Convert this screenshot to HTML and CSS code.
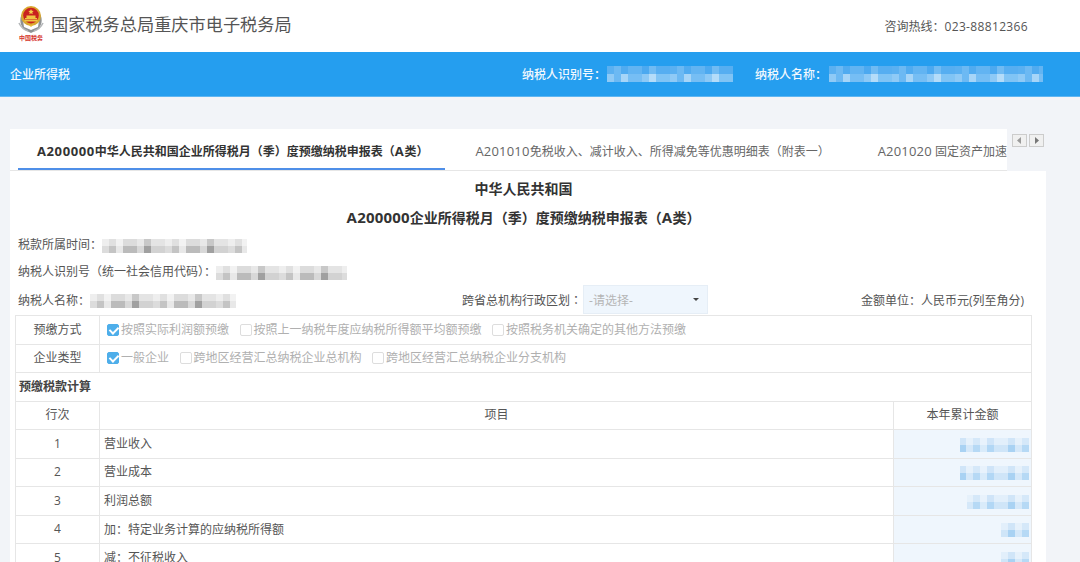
FILE: index.html
```html
<!DOCTYPE html>
<html lang="zh-CN">
<head>
<meta charset="utf-8">
<title>国家税务总局重庆市电子税务局</title>
<link rel="stylesheet" href="styles.css">
</head>
<body>
<header class="top">
  <div class="brand">
    <div class="logo">
      <svg class="emblem" width="28" height="28" viewBox="0 0 28 28" aria-hidden="true">
        <path d="M5 8C2 13 3 20 8 24L14 27L20 24C25 20 26 13 23 8L21 21L14 24L7 21Z" fill="#8f9294"/>
        <path d="M2 17C4 21 7 24 11 25M26 17C24 21 21 24 17 25" stroke="#b4b7b9" stroke-width="1.6" fill="none"/>
        <circle cx="14" cy="10" r="10" fill="#d9a62e"/>
        <circle cx="14" cy="9.6" r="7.8" fill="#c9201f"/>
        <path d="M14 3l.8 1.8 1.9.2-1.4 1.3.4 1.9-1.7-1-1.7 1 .4-1.9-1.4-1.3 1.9-.2z" fill="#f4cf4a"/>
        <path d="M8 12h12v1.5H8zM9.5 9.5h9V12h-9zM7.5 14h13v1.4h-13z" fill="#f0c544"/>
        <path d="M11 18l3 3 3-3-3 1z" fill="#e7b93a"/>
      </svg>
      <span class="seal">中国税务</span>
    </div>
    <h1 class="site-name">国家税务总局重庆市电子税务局</h1>
  </div>
  <div class="hotline">咨询热线<span class="colon">：</span><span class="phone">023-88812366</span></div>
</header>

<div class="bar">
  <span class="bar-title">企业所得税</span>
  <div class="bar-info">
    <span class="bar-label">纳税人识别号<span class="colon">：</span></span><span class="mosaic m-bar m-bar-id"></span>
    <span class="bar-label bar-label-name">纳税人名称<span class="colon">：</span></span><span class="mosaic m-bar m-bar-name"></span>
  </div>
</div>

<main class="page">
  <div class="tabs-row">
    <nav class="tabs">
      <a class="tab active"><span class="lat">A200000</span>中华人民共和国企业所得税月（季）度预缴纳税申报表（<span class="lat">A</span>类）</a>
      <a class="tab"><span class="lat">A201010</span>免税收入、减计收入、所得减免等优惠明细表（附表一）</a>
      <a class="tab"><span class="lat">A201020</span> 固定资产加速折旧（扣除）明细表（附表二）</a>
    </nav>
    <div class="arrows">
      <button class="arrow"><svg width="5" height="7" viewBox="0 0 5 7"><path d="M4 0v7L0 3.5z" fill="#9a9a9a"/></svg></button>
      <button class="arrow"><svg width="5" height="7" viewBox="0 0 5 7"><path d="M1 0v7l4-3.5z" fill="#777"/></svg></button>
    </div>
  </div>

  <section class="sheet">
    <h2 class="title title-1">中华人民共和国</h2>
    <h2 class="title title-2"><span class="lat">A200000</span>企业所得税月（季）度预缴纳税申报表（<span class="lat">A</span>类）</h2>
    <div class="meta meta-1">税款所属时间<span class="colon">：</span><span class="mosaic m-gray m-period"></span></div>
    <div class="meta meta-2">纳税人识别号（统一社会信用代码）<span class="colon">：</span><span class="mosaic m-gray m-id"></span></div>
    <div class="meta-row">
      <div class="meta-cell name-cell">纳税人名称<span class="colon">：</span><span class="mosaic m-gray m-name"></span></div>
      <div class="meta-cell region-cell">跨省总机构行政区划<span class="colon">：</span><span class="select"><span>-请选择-</span><i class="caret"></i></span></div>
      <div class="meta-cell unit-cell">金额单位<span class="colon">：</span>人民币元(列至角分)</div>
    </div>

    <table class="form">
      <colgroup><col class="c1"><col class="c2"><col class="c3"></colgroup>
      <tbody>
        <tr>
          <td class="ctr">预缴方式</td>
          <td colspan="2" class="opts">
            <div class="opt-list">
              <label class="opt"><i class="box on"></i>按照实际利润额预缴</label>
              <label class="opt"><i class="box"></i>按照上一纳税年度应纳税所得额平均额预缴</label>
              <label class="opt"><i class="box"></i>按照税务机关确定的其他方法预缴</label>
            </div>
          </td>
        </tr>
        <tr>
          <td class="ctr">企业类型</td>
          <td colspan="2" class="opts">
            <div class="opt-list">
              <label class="opt"><i class="box on"></i>一般企业</label>
              <label class="opt"><i class="box"></i>跨地区经营汇总纳税企业总机构</label>
              <label class="opt"><i class="box"></i>跨地区经营汇总纳税企业分支机构</label>
            </div>
          </td>
        </tr>
        <tr><td colspan="3" class="section">预缴税款计算</td></tr>
        <tr>
          <td class="ctr">行次</td>
          <td class="ctr">项目</td>
          <td class="ctr">本年累计金额</td>
        </tr>
        <tr><td class="ctr">1</td><td>营业收入</td><td class="amt"><span class="mosaic m-blue m-w70"></span></td></tr>
        <tr><td class="ctr">2</td><td>营业成本</td><td class="amt"><span class="mosaic m-blue m-w70"></span></td></tr>
        <tr><td class="ctr">3</td><td>利润总额</td><td class="amt"><span class="mosaic m-blue m-w63"></span></td></tr>
        <tr><td class="ctr">4</td><td>加<span class="colon">：</span>特定业务计算的应纳税所得额</td><td class="amt"><span class="mosaic m-blue m-w28"></span></td></tr>
        <tr><td class="ctr">5</td><td>减<span class="colon">：</span>不征税收入</td><td class="amt"><span class="mosaic m-blue m-w28"></span></td></tr>
      </tbody>
    </table>
  </section>
</main>
</body>
</html>
```
FILE: styles.css
```css
* { box-sizing: border-box; }
html, body { margin: 0; height: 562px; overflow: hidden; }
body {
  background: #f2f4f8;
  color: #444;
  font-family: "Open Sans", "Noto Sans CJK SC", sans-serif;
  font-size: 12px;
}
.colon { font-family: "Noto Sans CJK TC", "Noto Sans CJK SC", sans-serif; }
.lat { font-size: 13px; letter-spacing: 0.2px; }

.top {
  height: 52px;
  background: #fff;
  display: flex;
  justify-content: space-between;
  align-items: center;
  padding: 0 52px 0 17px;
}
.brand { display: flex; align-items: center; }
.logo { width: 28px; height: 42px; display: flex; flex-direction: column; align-items: center; margin-top: 1px; }
.emblem { display: block; flex: none; }
.seal {
  color: #d5342c;
  font-size: 6px;
  line-height: 9px;
  font-weight: 700;
  white-space: nowrap;
}
.site-name {
  margin: 0 0 3px 6px;
  font-size: 17.2px;
  font-weight: 400;
  color: #555;
  line-height: 24px;
}
.hotline { color: #555; font-size: 12px; line-height: 18px; }
.phone { letter-spacing: 0.35px; }

.bar {
  height: 45px;
  background: #259eef;
  border-bottom: 1px solid #5fb6f2;
  color: #f1f8fe;
  display: flex;
  justify-content: space-between;
  align-items: center;
  padding: 0 37px 0 10px;
  font-weight: 500;
}
.bar-info { display: flex; align-items: center; }
.m-bar-id { margin-left: 1px; }
.bar-label-name { margin-left: 22px; }
.m-bar-name { margin-left: 2px; }

.mosaic { display: inline-block; flex: none; vertical-align: middle; filter: blur(0.6px); background-repeat: no-repeat; background-size: 100% 50%; background-position: left top, left bottom; height: 14px; }
.m-bar {
  height: 16px;
  background-image:
    repeating-linear-gradient(90deg, #5ab0f1 0 7px, #6cb9f3 7px 14px, #50abf0 14px 21px, #62b4f2 21px 35px, #4ca9f0 35px 42px, #70bbf3 42px 49px, #56aef1 49px 63px),
    repeating-linear-gradient(90deg, #8fcaf6 0 7px, #6cb9f3 7px 14px, #a6d5f8 14px 21px, #76bef4 21px 35px, #8dc9f6 35px 42px, #b4dcf9 42px 49px, #80c4f5 49px 63px);
}
.m-bar-id { width: 126px; }
.m-bar-name { width: 214px; }
.m-gray {
  background-image:
    repeating-linear-gradient(90deg, #eee 0 7px, #e0e0e0 7px 14px, #f2f2f2 14px 21px, #dcdcdc 21px 35px, #e8e8e8 35px 42px, #c8c8c8 42px 49px, #e4e4e4 49px 63px),
    repeating-linear-gradient(90deg, #dcdcdc 0 7px, #c4c4c4 7px 14px, #e8e8e8 14px 21px, #bbb 21px 35px, #d8d8d8 35px 42px, #a0a0a0 42px 49px, #d2d2d2 49px 63px);
}
.m-period { width: 145px; }
.m-id { width: 131px; }
.m-name { width: 146px; }
.m-blue {
  background-image:
    repeating-linear-gradient(270deg, #d5e8f9 0 7px, #e6f1fb 7px 14px, #d0e5f8 14px 21px, #e2effb 21px 35px, #cfe4f8 35px 42px, #e8f2fc 42px 49px),
    repeating-linear-gradient(270deg, #b6d9f5 0 7px, #d5e8f9 7px 14px, #a9d2f3 14px 21px, #cfe5f8 21px 35px, #b2d7f5 35px 42px, #d9ebfa 42px 49px);
}
.m-w70 { width: 69px; }
.m-w63 { width: 62px; }
.m-w28 { width: 28px; }

.page { width: 1036px; margin: 32px 0 0 10px; }

.tabs-row { display: flex; height: 42px; }
.tabs {
  width: 997px;
  height: 42px;
  background: #fff;
  border-bottom: 1px solid #e6e6e6;
  display: flex;
  padding-left: 8px;
  overflow: hidden;
  white-space: nowrap;
}
.tab {
  flex: none;
  height: 41px;
  line-height: 45px;
  padding: 0 17px 0 19px;
  color: #666;
}
.tab + .tab { padding: 0 48px 0 30px; }
.tab + .tab + .tab { padding: 0; }
.tab.active {
  color: #333;
  font-weight: 700;
  border-bottom: 2px solid #4f8fe8;
}
.tab.active .lat { letter-spacing: 0.6px; }
.arrows { display: flex; gap: 2px; margin: 5px 0 0 5px; }
.arrow {
  width: 15px;
  height: 13px;
  padding: 0;
  border: 1px solid #ccc;
  background: #f0f0f0;
  display: flex;
  align-items: center;
  justify-content: center;
}
.arrow svg { display: block; }

.sheet { background: #fff; height: 392px; padding: 0 14px 0 5px; }
.title {
  margin: 0;
  text-align: center;
  font-size: 14px;
  font-weight: 700;
  color: #333;
  line-height: 28px;
}
.title .lat { font-size: 15px; }
.title-1 { padding-top: 4px; height: 31px; }
.title-2 { padding-top: 1px; height: 28px; }
.meta { padding-left: 3px; height: 27px; line-height: 27px; color: #555; }
.meta-row {
  display: flex;
  align-items: center;
  height: 31px;
  padding-left: 3px;
  color: #555;
}
.meta-cell { white-space: nowrap; }
.name-cell { width: 444px; }
.region-cell { display: flex; align-items: center; width: 399px; }
.select {
  width: 125px;
  height: 29px;
  margin-left: 1px;
  background: #eff6fd;
  border: 1px solid #e6eef6;
  color: #b5b5b5;
  display: flex;
  justify-content: space-between;
  align-items: center;
  padding: 0 8px 0 5px;
}
.caret {
  width: 0;
  height: 0;
  border-left: 3px solid transparent;
  border-right: 3px solid transparent;
  border-top: 3px solid #444;
}

.form {
  width: 1017px;
  border-collapse: collapse;
  table-layout: fixed;
  color: #555;
}
.c1 { width: 84px; }
.c3 { width: 138px; }
.form td {
  border: 1px solid #e6e6e6;
  height: 28.5px;
  padding: 0 4px;
  vertical-align: middle;
  white-space: nowrap;
  line-height: 16px;
}
.form .ctr { text-align: center; padding: 0; }
.form .opts { padding: 0 0 0 7px; color: #b0b0b0; }
.form .section { padding-left: 3px; font-weight: 700; color: #444; }
.form .amt { background: #eff6fd; text-align: right; padding: 0 2px 0 0; }
.opt-list { display: flex; gap: 10.5px; }
.opt { display: inline-flex; align-items: center; }
.box {
  width: 12px;
  height: 12px;
  margin-right: 2px;
  border: 1px solid #ddd;
  border-radius: 2px;
  background: #fff;
  display: inline-block;
  position: relative;
}
.box.on { background: #4eaeea; border-color: #4eaeea; }
.box.on::after {
  content: "";
  position: absolute;
  left: 3px;
  top: 0;
  width: 4px;
  height: 7px;
  border: solid #fff;
  border-width: 0 2px 2px 0;
  transform: rotate(45deg);
}
```
